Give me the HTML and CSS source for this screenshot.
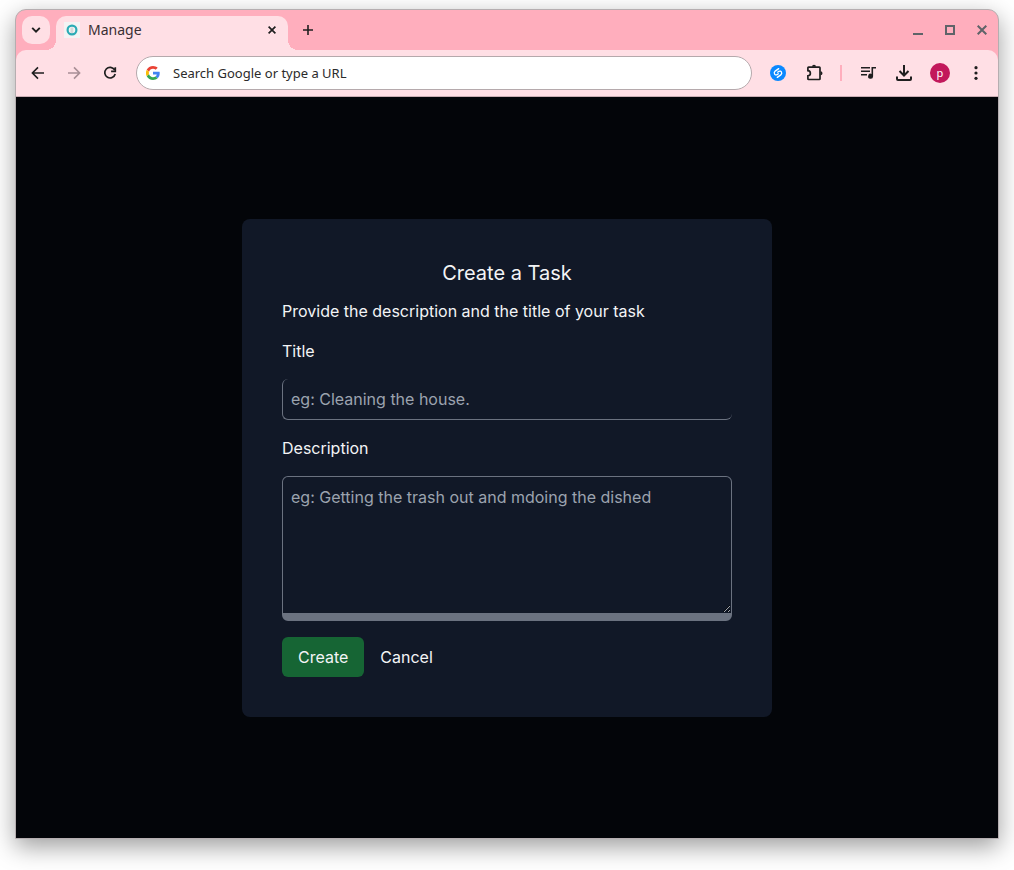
FILE: index.html
```html
<!DOCTYPE html>
<html lang="en">
<head>
<meta charset="utf-8">
<title>Manage</title>
<link rel="stylesheet" href="styles.css">
</head>
<body>
<div class="window">
  <header class="tabstrip">
    <button class="tab-search" type="button" aria-label="Search tabs">
      <svg width="10" height="6" viewBox="0 0 10 6" fill="none" stroke="#1f1f1f" stroke-width="1.9"><path d="M1.2 .8 5 4.6 8.8 .8"/></svg>
    </button>
    <div class="tab">
      <svg class="favicon" width="16" height="16" viewBox="0 0 16 16"><rect width="16" height="16" fill="#f3f3f3"/><circle cx="8" cy="8" r="4.4" fill="#f1f5f4" stroke="#2aabb5" stroke-width="2.2"/><path d="M6.500 5.500h2.800v5.400H6.500z" fill="#d3dada"/></svg>
      <span class="tab-title">Manage</span>
      <button class="tab-close" type="button" aria-label="Close tab">
        <svg width="8" height="8" viewBox="0 0 8 8" stroke="#1f1f1f" stroke-width="1.7"><path d="M.6.6 7.4 7.4M7.4.6.6 7.4"/></svg>
      </button>
    </div>
    <button class="new-tab" type="button" aria-label="New tab">
      <svg width="10" height="10" viewBox="0 0 10 10" stroke="#1f1f1f" stroke-width="1.6"><path d="M5 0v10M0 5h10"/></svg>
    </button>
    <div class="window-controls">
      <button type="button" aria-label="Minimize"><svg width="10" height="10" viewBox="0 0 10 10"><path d="M0 8h10v2H0z" fill="#5f6368"/></svg></button>
      <button type="button" aria-label="Maximize"><svg width="10" height="10" viewBox="0 0 10 10"><path d="M1 1h8v8H1z" fill="none" stroke="#5f6368" stroke-width="2"/></svg></button>
      <button type="button" aria-label="Close"><svg width="10" height="10" viewBox="0 0 10 10" stroke="#5f6368" stroke-width="2"><path d="M.7.7 9.3 9.3M9.3.7.7 9.3"/></svg></button>
    </div>
  </header>
  <div class="toolbar-wrap">
  <nav class="toolbar">
    <div class="nav-buttons">
      <button type="button" aria-label="Back"><svg width="20" height="20" viewBox="0 0 20 20" fill="none" stroke="#1f1f1f" stroke-width="1.6"><path d="M16 10H4.8M10 4.4 4.4 10l5.6 5.6"/></svg></button>
      <button type="button" aria-label="Forward" disabled><svg width="20" height="20" viewBox="0 0 20 20" fill="none" stroke="#a98f96" stroke-width="1.6"><path d="M4 10h11.2M10 4.4 15.6 10 10 15.6"/></svg></button>
      <button type="button" aria-label="Reload"><svg width="20" height="20" viewBox="0 0 20 20" fill="none" stroke="#1f1f1f" stroke-width="1.7"><path d="M14.6 6.9A5.3 5.3 0 1 0 15.2 11M15.3 4.2v4.1h-4.2"/></svg></button>
    </div>
    <label class="omnibox">
      <svg width="14" height="14" viewBox="0 0 48 48"><path fill="#ea4335" d="M24 9.5c3.5 0 6.7 1.2 9.2 3.6l6.9-6.9C35.9 2.4 30.5 0 24 0 14.6 0 6.5 5.4 2.6 13.2l8 6.2C12.4 13.7 17.700 9.5 24 9.500z"/><path fill="#4285f4" d="M47 24.600c0-1.600-.2-3.100-.4-4.600H24v9h12.900c-.6 3-2.300 5.500-4.800 7.200l7.700 6C44.400 38 47 31.800 47 24.600z"/><path fill="#fbbc05" d="M10.500 28.600A14.500 14.500 0 0 1 10.500 19.400l-8-6.200a24 24 0 0 0 0 21.600z"/><path fill="#34a853" d="M24 48c6.500 0 11.900-2.100 15.900-5.800l-7.700-6c-2.200 1.500-5 2.300-8.200 2.300-6.300 0-11.600-4.200-13.500-9.900l-8 6.200C6.500 42.600 14.600 48 24 48z"/></svg>
      <input class="address" type="text" placeholder="Search Google or type a URL" aria-label="Address and search bar">
    </label>
    <div class="actions">
      <button type="button" aria-label="Shazam"><svg width="16" height="16" viewBox="0 0 16 16"><circle cx="8" cy="8" r="8" fill="#0a88ff"/><path d="M8.700 3.600 5.200 6.100C3.200 7.700 4.800 10.900 7.100 9.700L8.300 8.800M7.300 12.400 10.800 9.900C12.800 8.300 11.200 5.100 8.900 6.300L7.700 7.200" fill="none" stroke="#ffffff" stroke-width="1.300" stroke-linecap="round"/></svg></button>
      <button type="button" aria-label="Extensions"><svg width="20" height="20" viewBox="0 0 20 20"><g transform="translate(1 -.5)"><path d="M3.600 4.600H14.300q.7 0 .7.7V16.300q0 .7-.7.7H3.600q-.7 0-.7-.7V13.400c3.300-.3 3.300-4.900 0-5.200V5.300q0-.7.7-.7z" fill="none" stroke="#1f1f1f" stroke-width="1.700"/><path d="M7 4.200a2 2 0 0 1 4 0zM15.500 8.800a2 2 0 0 1 0 4z" fill="#1f1f1f"/></g></svg></button>
      <span class="divider"></span>
      <button type="button" aria-label="Media controls"><svg width="20" height="20" viewBox="0 0 20 20"><g transform="translate(1 -.3)"><path d="M2 5h9M2 8.500h9M2 12h6" stroke="#1f1f1f" stroke-width="1.600"/><path d="M12.500 4.200H17v1.700h-2.900v7.600a2.500 2.500 0 1 1-1.600-2.300z" fill="#1f1f1f"/></g></svg></button>
      <button type="button" aria-label="Downloads"><svg width="20" height="20" viewBox="0 0 20 20" fill="none" stroke="#1f1f1f" stroke-width="2"><path d="M10 2v10M5.500 8l4.500 4.500L14.500 8M3 13.500V16q0 1 1 1h12q1 0 1-1v-2.500"/></svg></button>
      <button type="button" class="avatar" aria-label="Profile">p</button>
      <button type="button" aria-label="Menu"><svg width="20" height="20" viewBox="0 0 20 20" fill="#1f1f1f"><circle cx="10" cy="4.700" r="1.600"/><circle cx="10" cy="10" r="1.600"/><circle cx="10" cy="15.300" r="1.600"/></svg></button>
    </div>
  </nav>
  </div>
  <main class="page">
    <form class="card">
      <h1 class="heading">Create a Task</h1>
      <p class="intro">Provide the description and the title of your task</p>
      <label for="title">Title</label>
      <input class="field title-field" id="title" type="text" placeholder="eg: Cleaning the house.">
      <label for="description">Description</label>
      <textarea class="field description-field" id="description" placeholder="eg: Getting the trash out and mdoing the dished"></textarea>
      <div class="form-actions">
        <button class="create" type="button">Create</button>
        <button class="cancel" type="button">Cancel</button>
      </div>
    </form>
  </main>
</div>
</body>
</html>
```
FILE: styles.css
```css
* { box-sizing: border-box; }

body {
  margin: 0;
  min-height: 100vh;
  padding: 9px 15px 31px;
  display: flex;
  background: #ffffff;
  font-family: Inter, sans-serif;
}

button {
  padding: 0;
  border: 0;
  background: none;
  font: inherit;
  color: inherit;
}

svg { display: block; flex: none; }

.window {
  flex: 1;
  min-width: 0;
  display: flex;
  flex-direction: column;
  border: 1px solid #b5aeb0;
  border-radius: 11px 11px 0 0;
  overflow: hidden;
  background: #ffaebd;
  box-shadow: 0 8px 24px rgba(0, 0, 0, 0.38);
}

.tabstrip {
  height: 40px;
  padding: 6px 6px 0;
  display: flex;
  font-family: "Noto Sans", sans-serif;
}

.tab-search {
  width: 28px;
  height: 28px;
  border-radius: 10px;
  background: #ffdfe5;
  display: grid;
  place-items: center;
}

.tab {
  position: relative;
  width: 232px;
  margin-left: 6px;
  padding: 0 12px 6px 8px;
  display: flex;
  align-items: center;
  gap: 8px;
  border-radius: 10px 10px 0 0;
  background: #ffdfe5;
}

.tab::before,
.tab::after {
  content: "";
  position: absolute;
  bottom: 0;
  width: 10px;
  height: 10px;
}

.tab::before {
  right: 100%;
  background: radial-gradient(circle at 0 0, transparent 10px, #ffdfe5 10px);
}

.tab::after {
  left: 100%;
  background: radial-gradient(circle at 100% 0, transparent 10px, #ffdfe5 10px);
}

.tab-title {
  flex: 1;
  font-size: 14px;
  line-height: 20px;
  color: #3a3034;
}

.new-tab {
  width: 28px;
  height: 28px;
  margin-left: 6px;
  display: grid;
  place-items: center;
}

.window-controls {
  margin-left: auto;
  height: 28px;
  padding-right: 5px;
  display: flex;
  align-items: center;
  gap: 22px;
}

.toolbar-wrap { background: #ffaebd; }

.toolbar {
  height: 47px;
  padding: 0 12px;
  display: flex;
  align-items: center;
  border-bottom: 1px solid #c9adb3;
  border-radius: 10px 10px 0 0;
  background: #ffdfe5;
}

.nav-buttons {
  display: flex;
  gap: 16px;
}

.omnibox {
  flex: 1;
  min-width: 0;
  height: 34px;
  margin: 0 16px;
  padding: 0 9px;
  display: flex;
  align-items: center;
  gap: 13px;
  border: 1px solid #b5a9ac;
  border-radius: 17px;
  background: #ffffff;
}

.address {
  flex: 1;
  min-width: 0;
  padding: 0;
  border: 0;
  outline: 0;
  background: none;
  font: 13px/20px "Noto Sans", sans-serif;
}

.address::placeholder { color: #2b2b2b; opacity: 1; }

.actions {
  display: flex;
  align-items: center;
  gap: 16px;
}

.actions button {
  width: 20px;
  height: 20px;
  display: grid;
  place-items: center;
}

.divider {
  width: 2px;
  height: 16px;
  background: #ffaebd;
}

.actions .avatar {
  border-radius: 50%;
  background: #c2185b;
  color: #ffffff;
  font: 11px/18px "Noto Sans", sans-serif;
}

.page {
  flex: 1;
  padding: 16px;
  display: grid;
  place-items: center;
  background: #030509;
}

.card {
  width: 100%;
  max-width: 530px;
  padding: 40px;
  display: flex;
  flex-direction: column;
  gap: 16px;
  border-radius: 8px;
  background: #111827;
  color: #f3f4f6;
  font-size: 16px;
  line-height: 24px;
}

.heading {
  margin: 0 0 -4px;
  font-size: 20px;
  line-height: 28px;
  font-weight: 400;
  text-align: center;
}

.intro { margin: 0; }

.field {
  width: 100%;
  padding: 8px;
  border: 0 solid #6b7280;
  border-radius: 6px;
  outline: 0;
  background: transparent;
  color: inherit;
  font: inherit;
}

.field::placeholder { color: #9ca3af; opacity: 1; }

.title-field {
  height: 41px;
  border-width: 0 0 1px 1px;
}

.description-field {
  display: block;
  height: 145px;
  border-width: 1px 1px 8px;
  resize: both;
  color-scheme: dark;
}

.form-actions {
  display: flex;
  gap: 16px;
}

.create {
  padding: 8px 16px;
  border-radius: 6px;
  background: #166534;
}
```
